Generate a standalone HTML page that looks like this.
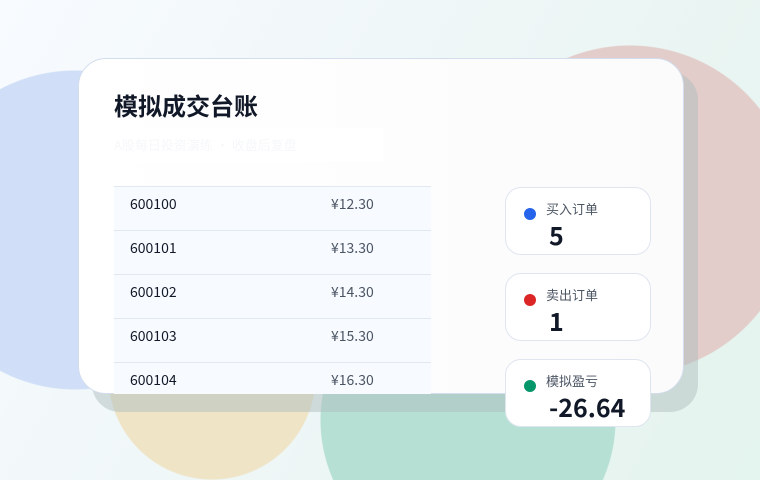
<!DOCTYPE html>
<html><head><meta charset="utf-8"><style>
*{margin:0;padding:0;box-sizing:border-box}
html{width:760px;height:480px;overflow:hidden}
body{width:760px;height:480px;overflow:hidden;position:relative;font-family:"Noto Sans CJK SC","Liberation Sans",sans-serif;
background:
radial-gradient(circle 160px at 75px 230px,#d0dff7 159px,transparent 160px),
radial-gradient(circle 165px at 630px 210px,#e2cdca 164px,transparent 165px),
radial-gradient(circle 104px at 212px 376px,#efe4c6 103px,transparent 104px),
radial-gradient(circle 148px at 468px 420px,#b6e0d4 147px,transparent 148px),
linear-gradient(120deg,#f8fbff 0%,#eef6f6 50%,#e4f4ee 100%)}
.card{position:absolute;left:78px;top:58px;width:606px;height:336px;border-radius:28px;background:linear-gradient(90deg,#ffffff,#fbfbfc);border:1.5px solid #d3dded}
.shadow{position:absolute;left:92px;top:72px;width:606px;height:340px;border-radius:28px;background:rgba(175,190,190,0.5)}
h1{position:absolute;left:114px;top:89px;font-size:24px;font-weight:bold;color:#111827;line-height:32px}
.sub{position:absolute;left:108px;top:128px;width:275px;height:34px;background:#fff;color:#f5f7f9;font-size:13px;line-height:34px;padding-left:6px}
.row{position:absolute;left:114px;width:317px;height:44px;background:#f7faff;border-top:1px solid #e2e8f0;font-size:14px;line-height:34px;color:#111827}
.row span{position:absolute;left:16px}
.row b{position:absolute;left:217px;font-weight:normal;color:#4b5563}
.st{position:absolute;left:505px;width:146px;height:68px;background:#fff;border:1px solid #dfe5ef;border-radius:16px}
.dot{position:absolute;left:18px;top:20px;width:12px;height:12px;border-radius:50%}
.lb{position:absolute;left:40px;top:12px;font-size:13px;color:#4b5563;line-height:18px}
.v{position:absolute;left:43px;top:31px;font-size:25px;font-weight:bold;color:#111827;line-height:32px}
</style></head><body>
<div class="shadow"></div>
<div class="card"></div>
<h1>模拟成交台账</h1>
<div class="sub">A股每日投资演练 · 收盘后复盘</div>
<div class="row" style="top:186px"><span>600100</span><b>¥12.30</b></div>
<div class="row" style="top:230px"><span>600101</span><b>¥13.30</b></div>
<div class="row" style="top:274px"><span>600102</span><b>¥14.30</b></div>
<div class="row" style="top:318px"><span>600103</span><b>¥15.30</b></div>
<div class="row" style="top:362px;height:32px"><span>600104</span><b>¥16.30</b></div>
<div class="st" style="top:187px"><div class="dot" style="background:#2563eb"></div><div class="lb">买入订单</div><div class="v">5</div></div>
<div class="st" style="top:273px"><div class="dot" style="background:#dc2626"></div><div class="lb">卖出订单</div><div class="v">1</div></div>
<div class="st" style="top:359px"><div class="dot" style="background:#059669"></div><div class="lb">模拟盈亏</div><div class="v">-26.64</div></div>
</body></html>
